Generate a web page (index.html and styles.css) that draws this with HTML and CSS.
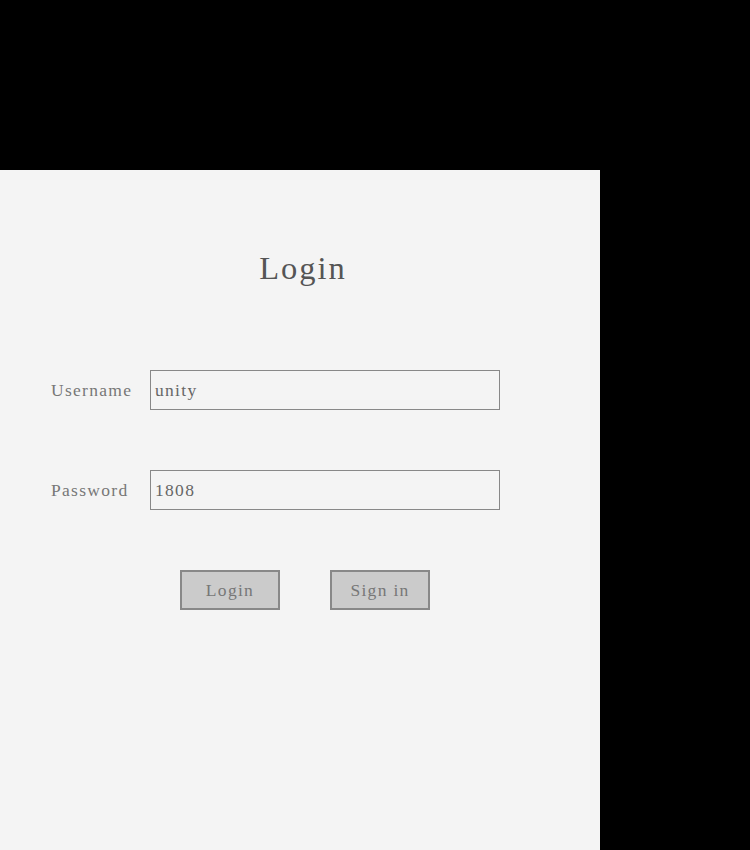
FILE: index.html
```html
<!DOCTYPE html>
<html>
<head>
<meta charset="utf-8">
<link rel="stylesheet" href="styles.css">
</head>
<body>
<div class="panel">
  <h1 class="title">Login</h1>
  <form class="form">
    <div class="row">
      <label class="label">Username</label>
      <div class="input">unity</div>
    </div>
    <div class="row">
      <label class="label">Password</label>
      <div class="input">1808</div>
    </div>
    <div class="buttons">
      <div class="btn">Login</div>
      <div class="btn">Sign in</div>
    </div>
  </form>
</div>
</body>
</html>
```
FILE: styles.css
```css
html, body {
  margin: 0;
  padding: 0;
  background: #000;
  height: 100%;
  overflow: hidden;
}
body {
  font-family: "Liberation Serif", "Times New Roman", serif;
}
.panel {
  margin-top: 170px;
  width: 600px;
  height: 680px;
  background: #f4f4f4;
  box-sizing: border-box;
  padding-top: 78px;
}
.title {
  margin: 0;
  text-align: center;
  font-weight: normal;
  font-size: 32.5px;
  line-height: 40px;
  letter-spacing: 2px;
  color: #555;
  padding-left: 6px;
}
.form {
  margin-top: 82px;
  display: flex;
  flex-direction: column;
  gap: 60px;
}
.row {
  display: flex;
  align-items: center;
  padding-left: 51px;
}
.label {
  width: 99px;
  font-size: 17.5px;
  letter-spacing: 1.3px;
  color: #777;
}
.input {
  width: 350px;
  height: 40px;
  box-sizing: border-box;
  border: 1px solid #888;
  padding-left: 4px;
  display: flex;
  align-items: center;
  font-size: 17.5px;
  letter-spacing: 1.3px;
  color: #666;
}
.buttons {
  display: flex;
  gap: 50px;
  padding-left: 180px;
}
.btn {
  width: 100px;
  height: 40px;
  box-sizing: border-box;
  border: 2px solid #888;
  background: #cbcbcb;
  display: flex;
  align-items: center;
  justify-content: center;
  font-size: 17.5px;
  letter-spacing: 1.3px;
  color: #777;
}
```
